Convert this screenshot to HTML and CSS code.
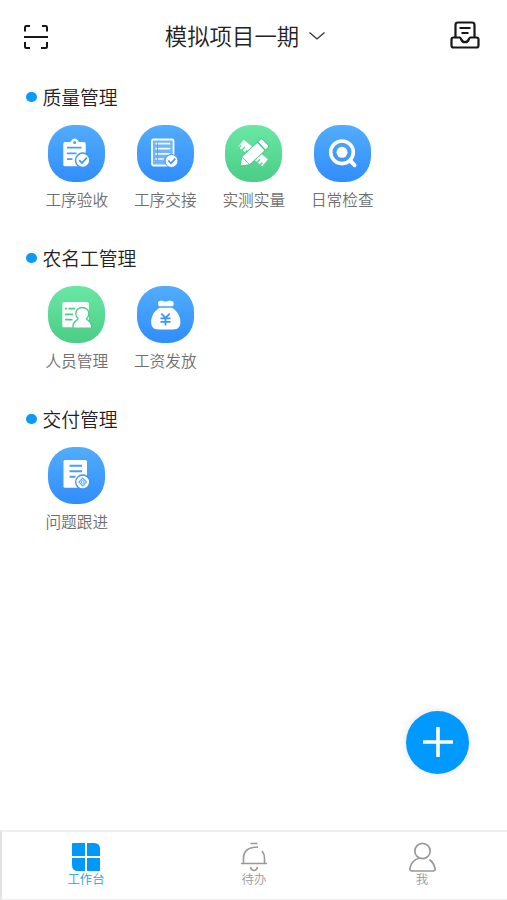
FILE: index.html
```html
<!DOCTYPE html>
<html lang="zh-CN">
<head>
<meta charset="utf-8">
<title>工作台</title>
<link rel="stylesheet" href="styles.css">
</head>
<body>
<div class="app">
  <header class="header">
    <svg class="scan" viewBox="0 0 24 24" fill="none" stroke="#161616" stroke-width="2">
      <path d="M1 6.500V2.500q0-1.500 1.500-1.500H6M18 1h3.500q1.500 0 1.500 1.500v4M23 17v4.500q0 1.500-1.500 1.500H17M6 23H2.500q-1.500 0-1.500-1.500V17M0 12h24"/>
    </svg>
    <h1 class="title">模拟项目一期
      <svg class="chevron" viewBox="0 0 18 10" fill="none" stroke="#333" stroke-width="1.3"><path d="M1.500 1.500L9 8l7.500-6.500"/></svg>
    </h1>
    <svg class="inbox" viewBox="0 0 30 28" fill="none" stroke="#161616" stroke-width="2.200" stroke-linejoin="round">
      <path d="M5.500 16V4q0-2.500 2.500-2.500h14q2.500 0 2.500 2.500v12"/>
      <path d="M3.500 16.500h6q1 0 1.500 1.500 1.200 3.200 4 3.200t4-3.200q.5-1.500 1.500-1.500h6q2 0 2 2v6q0 2-2 2h-23q-2 0-2-2v-6q0-2 2-2z"/>
      <path d="M9.500 7h11M11.500 12h7"/>
    </svg>
  </header>

  <main class="content">
    <section class="group">
      <h2 class="group-title">质量管理</h2>
      <div class="grid">
        <a class="item">
          <svg class="tile blue" viewBox="0 0 57 57">
            <path fill="#fff" d="M17 17h5.500l1-1.500q1-2 3.200-2t3.200 2l1 1.500H36q1.700 0 1.700 1.700v21q0 1.600-1.700 1.600H17q-1.700 0-1.700-1.600v-21Q15.300 17 17 17z"/>
            <circle cx="26.700" cy="17.500" r="1.500" fill="#479ff8"/>
            <path d="M19 22.700h14.500M19 28.400h9.500M19 34.200h5.500" stroke="#479ff8" stroke-width="1.700"/>
            <circle cx="34.700" cy="35.300" r="7.200" fill="#fff" stroke="#3b96f9" stroke-width="1.500"/>
            <path d="M31.200 35.200l2.700 2.800 4.900-5.300" fill="none" stroke="#3b96f9" stroke-width="1.700"/>
          </svg>
          <span class="label">工序验收</span>
        </a>
        <a class="item">
          <svg class="tile blue" viewBox="0 0 57 57">
            <rect x="15" y="14.500" width="21.500" height="26" rx="1.500" fill="#6fb5fb" stroke="#fff" stroke-width="1.800"/>
            <path d="M18.300 18.700h15M18.300 23.700h15M18.300 28.800h15M18.300 34h8.500" stroke="#f2f8ff" stroke-width="1.700"/>
            <path d="M20.500 17.500v18" stroke="#479ff8" stroke-width=".8"/>
            <circle cx="34.500" cy="36" r="6.500" fill="#fff" stroke="#3b96f9"/>
            <path d="M31.300 35.500l2.600 2.800 4.400-4.700" fill="none" stroke="#3b96f9" stroke-width="1.600"/>
          </svg>
          <span class="label">工序交接</span>
        </a>
        <a class="item">
          <svg class="tile green" viewBox="0 0 57 57">
            <g transform="rotate(39 28 28)" fill="#fff">
              <path d="M12.500 23.500h31v9H42v-3h-1.500v3H38v-4h-1.500v4H34v-3h-1.500v3h-10v-3H21v3h-2.500v-4H17v4h-2.500v-3H13v3h-.5z"/>
            </g>
            <g transform="rotate(-43 28.500 28.500)" fill="#fff" stroke="#4cc98a" stroke-width="1">
              <path d="M10 28.500l8-5.700h21v11.400H18zM39.500 22.800H43q2 0 2 2v7.400q0 2-2 2h-3.500z"/>
              <path d="M18 22.800v11.400" stroke-width=".8"/>
            </g>
          </svg>
          <span class="label">实测实量</span>
        </a>
        <a class="item">
          <svg class="tile blue" viewBox="0 0 57 57">
            <g fill="none" stroke="#fff">
              <circle cx="28" cy="27.300" r="11.300" stroke-width="3.600"/>
              <path d="M36.500 36l4 4.200" stroke-width="4" stroke-linecap="round"/>
            </g>
            <circle cx="28" cy="27.300" r="5.500" fill="#fff"/>
          </svg>
          <span class="label">日常检查</span>
        </a>
      </div>
    </section>

    <section class="group">
      <h2 class="group-title">农名工管理</h2>
      <div class="grid">
        <a class="item">
          <svg class="tile green" viewBox="0 0 57 57">
            <rect x="14.300" y="16" width="26.500" height="25.300" rx="1.500" fill="#fff"/>
            <path d="M17 22.700h2M20.500 22.700H27M17 28.300h8M17 33.700h7.500" stroke="#4ecb8c" stroke-width="1.700"/>
            <path fill="#fff" stroke="#4ecb8c" stroke-width="1.300" d="M34.300 21.500c-4 0-6.500 2.800-6.500 6 0 2.300.9 4 2.300 5.200-.3 2-5.100 1.800-5.100 7.300v2.200h18.600V40c0-5.500-4.800-5.300-5.100-7.300 1.400-1.200 2.300-2.900 2.300-5.200 0-3.200-2.500-6-6.500-6z"/>
          </svg>
          <span class="label">人员管理</span>
        </a>
        <a class="item">
          <svg class="tile blue" viewBox="0 0 57 57">
            <path fill="#fff" d="M23 15q1.500-1.200 3 0 2.500 1 5 0 1.500-1.200 3 0 2.700-.5 2.700 2.400t-2.500 2.900H23.500q-2.500 0-2.500-2.900T23 15z"/>
            <path fill="#fff" d="M22.500 21.800h12.500c5 3 8.400 8.400 8.400 14.200 0 5-2.400 7.400-7.400 7.400H21.500c-5 0-7.400-2.400-7.400-7.400 0-5.800 3.400-11.200 8.400-14.200z"/>
            <path d="M24.300 27.700l4.200 4.300 4.200-4.300M23.500 32.300h10M23.500 35.800h10M28.500 32v7.500" fill="none" stroke="#3b96f9" stroke-width="1.800"/>
          </svg>
          <span class="label">工资发放</span>
        </a>
      </div>
    </section>

    <section class="group">
      <h2 class="group-title">交付管理</h2>
      <div class="grid">
        <a class="item">
          <svg class="tile blue" viewBox="0 0 57 57">
            <rect x="15.500" y="13" width="23.500" height="27.800" rx="1.500" fill="#fff"/>
            <path d="M21.500 18.700h12.500M21.500 24.200h12.500M21.500 29.800h6" stroke="#479ff8" stroke-width="2"/>
            <circle cx="34.700" cy="35" r="7" fill="#fff" stroke="#3b96f9" stroke-width="1.300"/>
            <path d="M34.700 31l3.800 4-3.800 4-3.800-4z" fill="none" stroke="#5faafa" stroke-width="1.100"/>
            <circle cx="34.700" cy="35" r="1.400" fill="none" stroke="#5faafa"/>
          </svg>
          <span class="label">问题跟进</span>
        </a>
      </div>
    </section>
  </main>

  <button class="fab" aria-label="新增">
    <svg viewBox="0 0 30 30" stroke="#fff" stroke-width="3.600"><path d="M0 15h30M15 0v30"/></svg>
  </button>

  <nav class="tabs">
    <a class="tab active">
      <svg class="tab-icon" viewBox="0 0 30 30" fill="#0099fb">
        <path d="M2 1h12v13H1V2q0-1 1-1zM16 1h7q6 0 6 6v7H16zM1 16h13v13H7q-6 0-6-6zM16 16h13v12q0 1-1 1H16z"/>
      </svg>
      <span>工作台</span>
    </a>
    <a class="tab">
      <svg class="tab-icon" viewBox="0 0 30 30" fill="none" stroke="#999" stroke-width="1.600">
        <path d="M11.500 1.500h7M2 21.500h26M4.500 21.500V16q0-9.500 11-10.800h3.500M23 9q2.500 3 2.500 7v5.500M11.500 25q1 3.500 3.500 3.500t3.500-3.500"/>
      </svg>
      <span>待办</span>
    </a>
    <a class="tab">
      <svg class="tab-icon" viewBox="0 0 30 30" fill="none" stroke="#999" stroke-width="1.700" stroke-linecap="round">
        <circle cx="15.500" cy="9" r="7.700"/>
        <path d="M11.500 16.500Q5 18 3 26q-.7 3 2.300 3h20.400q3 0 2.300-3-1.200-5-5-8"/>
      </svg>
      <span>我</span>
    </a>
  </nav>
</div>
</body>
</html>
```

FILE: styles.css
```css
* {
  box-sizing: border-box;
}

body {
  margin: 0;
  background: #fff;
  font-family: "Noto Sans CJK SC", sans-serif;
  font-weight: 350;
  color: #222;
}

.app {
  position: relative;
  display: flex;
  flex-direction: column;
  height: 900px;
  overflow: hidden;
}

.header {
  display: flex;
  align-items: center;
  justify-content: space-between;
  height: 72px;
  padding: 1px 27px 0 24px;
}

.scan {
  width: 24px;
  height: 24px;
}

.title {
  display: flex;
  align-items: center;
  gap: 9px;
  margin: -3px 12px 0 5px;
  font-size: 22.4px;
  font-weight: 350;
  line-height: 32px;
}

.chevron {
  width: 18px;
  height: 10px;
  margin-top: 2px;
}

.inbox {
  width: 30px;
  height: 28px;
  margin-top: -3px;
}

.content {
  flex: 1;
  padding-top: 11px;
}

.group {
  height: 161px;
}

.group-title {
  display: flex;
  align-items: center;
  gap: 6px;
  height: 28px;
  margin: 0 0 14px;
  padding-left: 26px;
  font-size: 18.8px;
  font-weight: 350;
  line-height: 26px;
}

.group-title::before {
  content: "";
  width: 10.5px;
  height: 10.5px;
  border-radius: 50%;
  background: #0a9bf8;
}

.grid {
  display: grid;
  grid-template-columns: repeat(4, 88.5px);
  padding-left: 32.5px;
}

.item {
  display: flex;
  flex-direction: column;
  align-items: center;
}

.tile {
  width: 57px;
  height: 57px;
  border-radius: 25.5px;
}

.blue {
  background: linear-gradient(#52adfb, #308dfb);
}

.green {
  background: linear-gradient(#69e8a4, #4bcd86);
}

.label {
  margin-top: 6px;
  font-size: 15.7px;
  line-height: 24px;
  color: #707070;
}

.fab {
  position: absolute;
  left: 406px;
  top: 711px;
  display: flex;
  align-items: center;
  justify-content: center;
  width: 63px;
  height: 63px;
  padding: 0 0 2px;
  border: 0;
  border-radius: 50%;
  background: #0099ff;
  box-shadow: 0 0 8px rgba(0, 0, 0, 0.12);
}

.fab svg {
  width: 30px;
  height: 30px;
}

.tabs {
  display: grid;
  grid-template-columns: repeat(3, 1fr);
  height: 70px;
  padding-right: 1px;
  border-top: 2px solid #efefef;
  border-left: 2px solid #e3e3e3;
  border-bottom: 1px solid #eee;
}

.tab {
  display: flex;
  flex-direction: column;
  align-items: center;
  padding-top: 10px;
  font-size: 12.4px;
  line-height: 16px;
  color: #999;
}

.tab.active {
  color: #1d9fd8;
}

.tab-icon {
  width: 30px;
  height: 30px;
}

.tab span {
  margin-top: -1px;
}
```
